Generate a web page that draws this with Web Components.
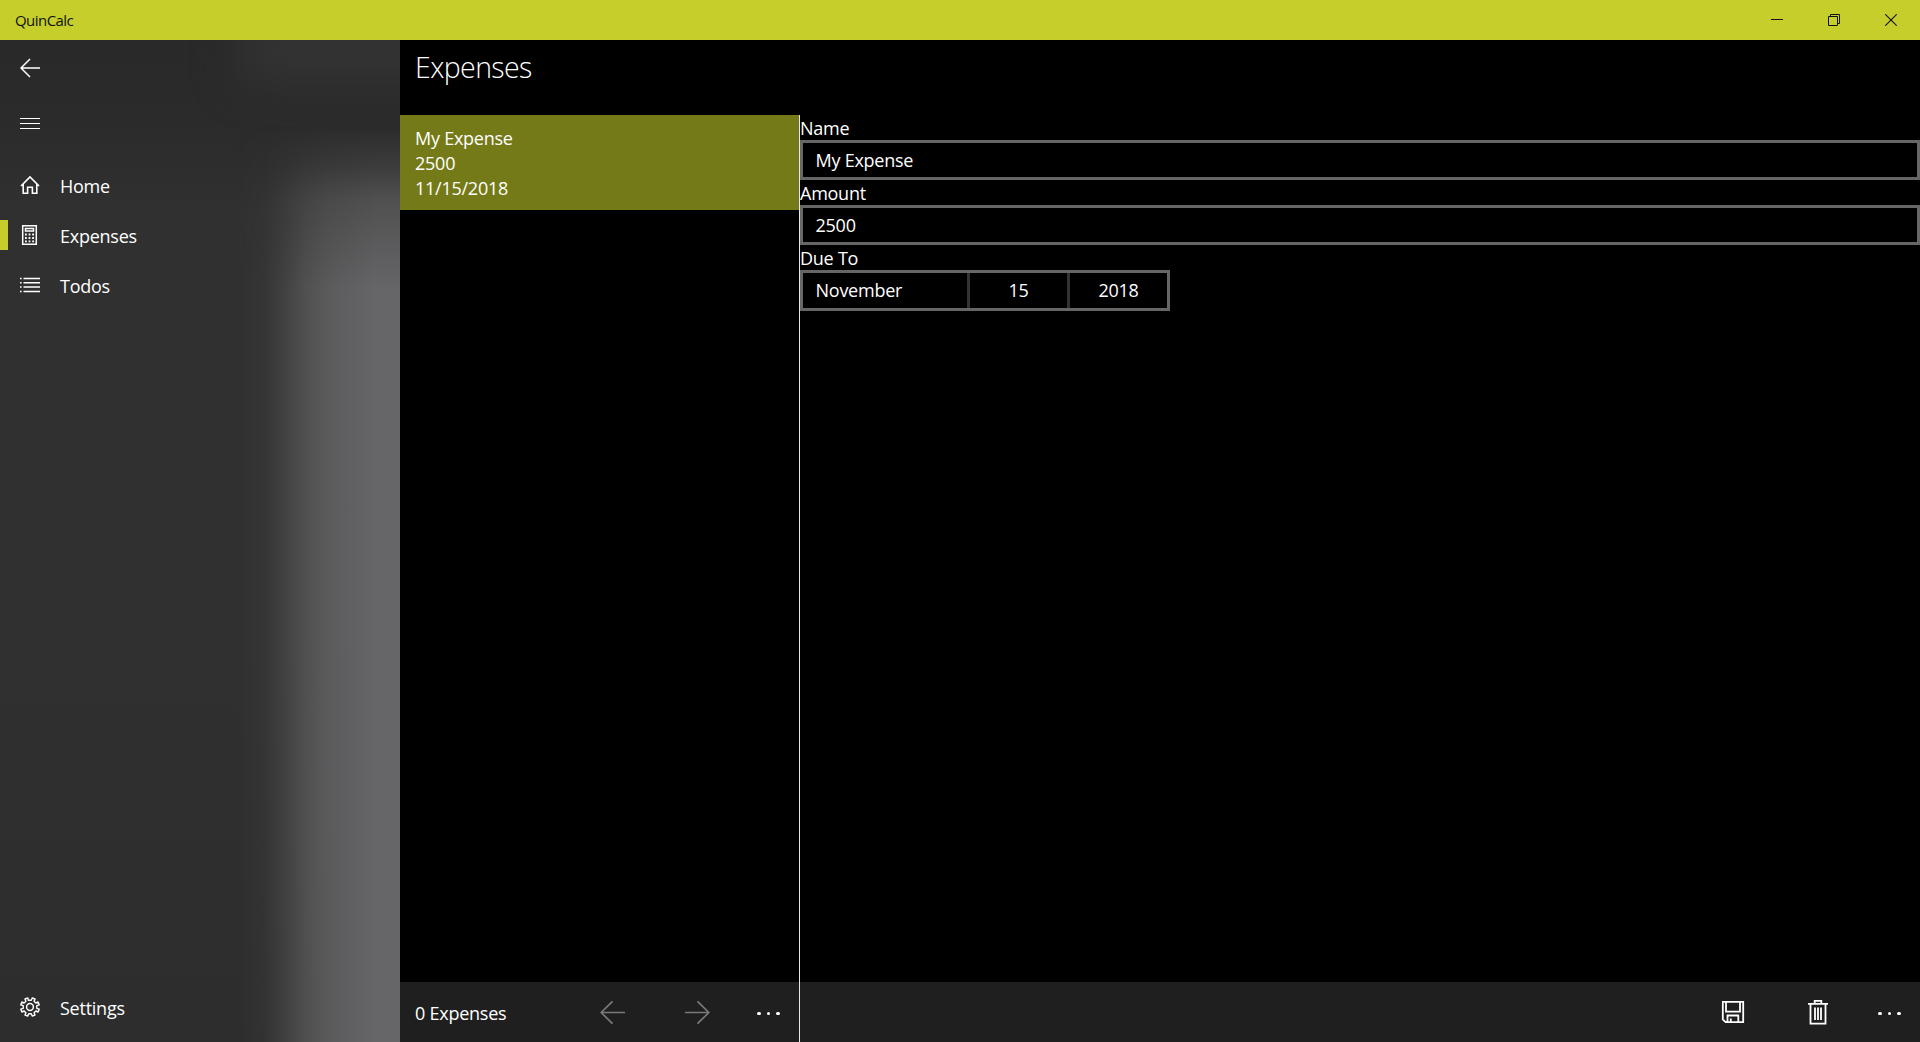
<!DOCTYPE html>
<html lang="en">
<head>
<meta charset="utf-8" />
<title>QuinCalc</title>
<style>
  html, body { margin: 0; height: 100%; background: #000; overflow: hidden; }
  body {
    --accent: #c5ce2a;
    --ui-font: "Open Sans", "Noto Sans", sans-serif;
    font: 18px/25px var(--ui-font);
    letter-spacing: -0.25px;
    color: #fff;
  }
</style>
</head>
<body>
<quin-app>
  <title-bar slot="title">QuinCalc</title-bar>
  <nav-pane slot="nav">
    <nav-item icon="home">Home</nav-item>
    <nav-item icon="calculator" selected>Expenses</nav-item>
    <nav-item icon="list">Todos</nav-item>
    <nav-item icon="gear" slot="footer">Settings</nav-item>
  </nav-pane>
  <page-header slot="header">Expenses</page-header>
  <expense-item slot="list">
    <span slot="name">My Expense</span>
    <span slot="amount">2500</span>
    <span slot="date">11/15/2018</span>
  </expense-item>
  <command-bar slot="list-bar">
    <span slot="content">0 Expenses</span>
    <bar-button icon="prev" disabled></bar-button>
    <bar-button icon="next" disabled></bar-button>
  </command-bar>
  <form-field slot="detail" label="Name">My Expense</form-field>
  <form-field slot="detail" label="Amount">2500</form-field>
  <date-field slot="detail" label="Due To">
    <span slot="month">November</span>
    <span slot="day">15</span>
    <span slot="year">2018</span>
  </date-field>
  <command-bar slot="detail-bar">
    <bar-button icon="save"></bar-button>
    <bar-button icon="trash"></bar-button>
  </command-bar>
</quin-app>

<script>
const icons = {
  back: { w: 20, h: 20, body: `<path d="M.8 10H20M10 1 1 10l9 9" stroke-width="1.5"/>` },
  menu: { w: 20, h: 12, body: `<path d="M0 .5h20M0 5.5h20M0 10.5h20" stroke-width="1"/>` },
  home: { w: 20, h: 20, body: `<path d="M1 11 10 2l9 9M3.2 9.2v9h4.4v-6h4.8v6h4.4v-9" stroke-width="1.6"/>` },
  calculator: {
    w: 20, h: 22,
    body: `<path d="M2.7 1.7h13.6v18.6H2.7zM5.5 4.5h8v2.6h-8z" stroke-width="1.5"/>
      <path d="M5 10.5h9M5 14h9M5 17.3h9" stroke-width="1.8" stroke-dasharray="1.8 1.8"/>`,
  },
  list: {
    w: 20, h: 16,
    body: `<path d="M3.5 1.5h16.5M3.5 5.8h16.5M3.5 10.1h16.5M3.5 14.5h16.5M0 1.5h1.6M0 5.8h1.6M0 10.1h1.6M0 14.5h1.6" stroke-width="1.5"/>`,
  },
  gear: {
    w: 20, h: 20,
    body: `<circle cx="10" cy="10" r="3.4" stroke-width="1.5"/>
      <path stroke-width="1.4" stroke-linejoin="round" d="M8.3 3.2 7.8.9 5 2l.9 2.2-1.8 1.8L1.9 5 .8 7.8l2.4.9v2.6l-2.4.9L1.9 15l2.2-1 1.8 1.8L5 18l2.8 1.1.9-2.3h2.6l.9 2.3L15 18l-.9-2.2 1.8-1.8 2.2 1 1.1-2.8-2.4-.9V8.7l2.4-.9L18.1 5l-2.2 1-1.8-1.8L15 2 12.2.9l-.9 2.3z"/>`,
  },
  prev: { w: 25, h: 24, body: `<path d="M1 12.5h24M12.5 1.3 1.2 12.5l11.3 11.2" stroke-width="1.7"/>` },
  next: { w: 25, h: 24, body: `<path d="M24 12.5H0M12.5 1.3l11.3 11.2-11.3 11.2" stroke-width="1.7"/>` },
  save: {
    w: 24, h: 24,
    body: `<path d="M1.8 1.8h20.4v20.4H4.6l-2.8-2.8zM5 1.8v9.8h14V1.8M6.5 22v-6.5h10.8V22M9.8 18.5V22" stroke-width="1.8"/>`,
  },
  trash: {
    w: 24, h: 26,
    body: `<path d="M2 4.9h20M4.5 4.9v19.8h15V4.9M8.7 4.7V1.9h6.6v2.8M9 8.5V21M12 8.5V21M15 8.5V21" stroke-width="1.8"/>`,
  },
  minimize: { w: 12, h: 12, body: `<path d="M0 5.5h12" stroke-width="1"/>` },
  restore: { w: 12, h: 12, body: `<path d="M.5 2.5h9v9h-9zM2.5 2.5v-2h9v9h-2" stroke-width="1"/>` },
  close: { w: 12, h: 12, body: `<path d="m.3.3 11.4 11.4M11.7.3.3 11.7" stroke-width="1.1"/>` },
};

const icon = (name) => {
  const { w, h, body } = icons[name];
  return `<svg width="${w}" height="${h}" viewBox="0 0 ${w} ${h}" fill="none" stroke="currentColor" aria-hidden="true">${body}</svg>`;
};

class BaseElement extends HTMLElement {
  constructor() {
    super();
    this.attachShadow({ mode: "open" });
  }
  connectedCallback() {
    this.shadowRoot.innerHTML = this.render();
  }
}

class QuinApp extends BaseElement {
  render() {
    return `
      <style>
        :host { display: flex; flex-direction: column; height: 100vh; }
        .body { display: flex; flex: 1; min-height: 0; }
        .page { display: flex; flex-direction: column; flex: 1; min-width: 0; }
        .columns { display: flex; flex: 1; min-height: 0; }
        .master {
          display: flex; flex-direction: column; flex: none; box-sizing: border-box;
          width: 400px; border-right: 1px solid #e6e6e6;
        }
        .detail { display: flex; flex-direction: column; flex: 1; }
        .fill { flex: 1; }
      </style>
      <slot name="title"></slot>
      <div class="body">
        <slot name="nav"></slot>
        <div class="page">
          <slot name="header"></slot>
          <div class="columns">
            <div class="master">
              <div class="fill"><slot name="list"></slot></div>
              <slot name="list-bar"></slot>
            </div>
            <div class="detail">
              <div class="fill"><slot name="detail"></slot></div>
              <slot name="detail-bar"></slot>
            </div>
          </div>
        </div>
      </div>`;
  }
}

class TitleBar extends BaseElement {
  render() {
    return `
      <style>
        :host {
          display: flex; justify-content: space-between; align-items: center;
          height: 40px; flex: none; background: var(--accent); color: #111;
          font-size: 15px; letter-spacing: -0.55px;
        }
        .caption { padding: 1px 0 0 15px; }
        .buttons { display: flex; padding-right: 1px; }
        .buttons span { display: flex; width: 57px; height: 40px; align-items: center; justify-content: center; }
      </style>
      <span class="caption"><slot></slot></span>
      <div class="buttons">
        <span>${icon("minimize")}</span>
        <span>${icon("restore")}</span>
        <span>${icon("close")}</span>
      </div>`;
  }
}

class NavPane extends BaseElement {
  render() {
    // the acrylic backdrop is a dark pane with a soft lighter block on its right
    return `
      <style>
        :host {
          position: relative; display: flex; flex-direction: column;
          width: 400px; flex: none; overflow: hidden;
          background: linear-gradient(#292929, #2b2b2b 80px, #303030 170px, #303030 600px, #2d2d2d);
        }
        .glow {
          position: absolute; inset: 0;
          background: linear-gradient(90deg,
            rgba(102, 102, 104, 0) 235px, rgba(102, 102, 104, .1) 264px,
            rgba(102, 102, 104, .33) 285px, rgba(102, 102, 104, .6) 305px,
            rgba(102, 102, 104, .8) 328px, #666668 375px);
          -webkit-mask-image: linear-gradient(transparent 85px, rgba(0, 0, 0, .25) 125px, rgba(0, 0, 0, .6) 160px, #000 250px);
          mask-image: linear-gradient(transparent 85px, rgba(0, 0, 0, .25) 125px, rgba(0, 0, 0, .6) 160px, #000 250px);
        }
        .haze {
          position: absolute; left: 240px; top: -20px; width: 220px; height: 60px;
          background: #343434; filter: blur(22px);
        }
        .top, .items, .footer { position: relative; }
        .top { height: 120px; }
        .top span { display: flex; align-items: center; width: 60px; height: 56px; justify-content: center; }
        .items { flex: 1; }
        .footer { padding-bottom: 10px; }
      </style>
      <div class="haze"></div>
      <div class="glow"></div>
      <div class="top"><span>${icon("back")}</span><span>${icon("menu")}</span></div>
      <div class="items"><slot></slot></div>
      <div class="footer"><slot name="footer"></slot></div>`;
  }
}

class NavItem extends BaseElement {
  render() {
    return `
      <style>
        :host { display: flex; align-items: center; height: 50px; }
        .mark { width: 8px; height: 30px; }
        :host([selected]) .mark { background: var(--accent); }
        .icon { display: flex; width: 44px; justify-content: center; margin-right: 8px; }
        .label { padding-top: 2px; }
      </style>
      <span class="mark"></span>
      <span class="icon">${icon(this.getAttribute("icon"))}</span>
      <span class="label"><slot></slot></span>`;
  }
}

class PageHeader extends BaseElement {
  render() {
    return `
      <style>
        :host {
          display: block; height: 75px; flex: none; padding-left: 15px; box-sizing: border-box;
          font-size: 28.5px; line-height: 54px; font-weight: 300; letter-spacing: -0.6px;
        }
      </style>
      <slot></slot>`;
  }
}

class ExpenseItem extends BaseElement {
  render() {
    return `
      <style>
        :host {
          display: flex; flex-direction: column; box-sizing: border-box; height: 95px;
          padding: 11px 15px 9px; background: #757a18;
        }
      </style>
      <slot name="name"></slot>
      <slot name="amount"></slot>
      <slot name="date"></slot>`;
  }
}

class FormField extends BaseElement {
  render() {
    return `
      <style>
        :host { display: block; }
        .label { height: 25px; padding-top: 1px; box-sizing: border-box; }
        .box {
          box-sizing: border-box; height: 40px; padding: 5px 12.5px; border: 3px solid #666;
        }
      </style>
      <div class="label">${this.getAttribute("label")}</div>
      <div class="box"><slot></slot></div>`;
  }
}

class DateField extends BaseElement {
  render() {
    return `
      <style>
        :host { display: block; }
        .label { height: 25px; padding-top: 1px; box-sizing: border-box; }
        .box {
          display: flex; box-sizing: border-box; width: 370px; height: 41px;
          border: 3px solid #666; line-height: 35px;
        }
        .month { width: 151.5px; padding-left: 12.5px; }
        .day, .year { flex: 1; border-left: 3px solid #333; text-align: center; }
      </style>
      <div class="label">${this.getAttribute("label")}</div>
      <div class="box">
        <div class="month"><slot name="month"></slot></div>
        <div class="day"><slot name="day"></slot></div>
        <div class="year"><slot name="year"></slot></div>
      </div>`;
  }
}

class CommandBar extends BaseElement {
  render() {
    return `
      <style>
        :host { display: flex; height: 60px; flex: none; background: #1f1f1f; }
        .content { flex: 1; padding: 19px 0 0 15px; }
        .more { display: flex; gap: 6px; width: 59px; padding: 30px 1px 0 0; justify-content: center; }
        .more i { width: 3.4px; height: 3.4px; border-radius: 50%; background: #fff; }
      </style>
      <div class="content"><slot name="content"></slot></div>
      <slot></slot>
      <div class="more"><i></i><i></i><i></i></div>`;
  }
}

class BarButton extends BaseElement {
  render() {
    return `
      <style>
        :host {
          display: flex; width: 85px; height: 60px; box-sizing: border-box;
          align-items: center; justify-content: center; padding-left: 1px;
        }
        :host([disabled]) { color: #797979; }
      </style>
      ${icon(this.getAttribute("icon"))}`;
  }
}

customElements.define("quin-app", QuinApp);
customElements.define("title-bar", TitleBar);
customElements.define("nav-pane", NavPane);
customElements.define("nav-item", NavItem);
customElements.define("page-header", PageHeader);
customElements.define("expense-item", ExpenseItem);
customElements.define("form-field", FormField);
customElements.define("date-field", DateField);
customElements.define("command-bar", CommandBar);
customElements.define("bar-button", BarButton);
</script>
</body>
</html>
